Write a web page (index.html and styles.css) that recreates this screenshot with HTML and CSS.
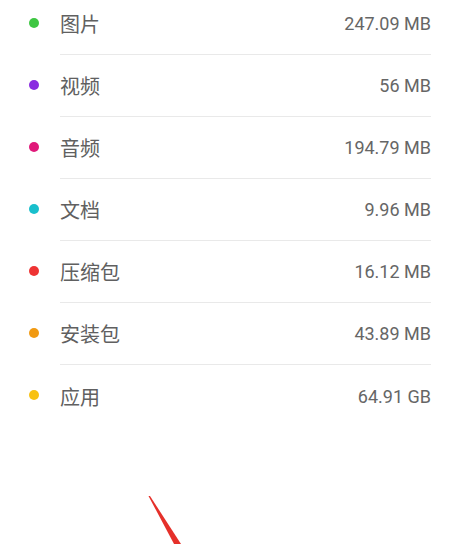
FILE: index.html
```html
<!DOCTYPE html>
<html lang="zh">
<head>
<meta charset="utf-8">
<link rel="stylesheet" href="styles.css">
</head>
<body>
<ul class="list">
  <li class="row"><span class="dot green"></span><div class="body"><span class="label">图片</span><span class="value">247.09 MB</span></div></li>
  <li class="row"><span class="dot purple"></span><div class="body"><span class="label">视频</span><span class="value">56 MB</span></div></li>
  <li class="row"><span class="dot pink"></span><div class="body"><span class="label">音频</span><span class="value">194.79 MB</span></div></li>
  <li class="row"><span class="dot cyan"></span><div class="body"><span class="label">文档</span><span class="value">9.96 MB</span></div></li>
  <li class="row"><span class="dot red"></span><div class="body"><span class="label">压缩包</span><span class="value">16.12 MB</span></div></li>
  <li class="row"><span class="dot orange"></span><div class="body"><span class="label">安装包</span><span class="value">43.89 MB</span></div></li>
  <li class="row last"><span class="dot yellow"></span><div class="body"><span class="label">应用</span><span class="value">64.91 GB</span></div></li>
</ul>
<svg class="arrow" width="453" height="544" viewBox="0 0 453 544">
  <polygon points="148.5,496 150,496 181,544 174,544" fill="#e5302a"/>
</svg>
</body>
</html>
```
FILE: styles.css
```css
html, body {
  margin: 0;
  padding: 0;
  background: #ffffff;
  width: 453px;
  height: 544px;
  overflow: hidden;
  position: relative;
}
.list {
  list-style: none;
  margin: -7px 0 0 0;
  padding: 0;
}
.row {
  display: flex;
  align-items: stretch;
  height: 62px;
}
.dot {
  width: 10px;
  height: 10px;
  border-radius: 50%;
  margin: 0 21px 0 29px;
  align-self: center;
  position: relative;
  top: -1px;
}
.green { background: #3ec642; }
.purple { background: #8a2be0; }
.pink { background: #e0197a; }
.cyan { background: #19bfcc; }
.red { background: #ee3333; }
.orange { background: #f19a12; }
.yellow { background: #f8c112; }
.body {
  flex: 1;
  margin-right: 22px;
  display: flex;
  align-items: center;
  justify-content: space-between;
  border-bottom: 1px solid #e9e9e9;
  box-sizing: border-box;
}
.last .body { border-bottom: none; }
.label {
  font-family: "Noto Sans CJK SC", "Noto Sans", sans-serif;
  font-size: 20px;
  font-weight: 400;
  color: #606060;
}
.value {
  font-family: Roboto, "Noto Sans", sans-serif;
  font-size: 18px;
  font-weight: 400;
  color: #666666;
}
.arrow {
  position: absolute;
  left: 0;
  top: 0;
}
```
